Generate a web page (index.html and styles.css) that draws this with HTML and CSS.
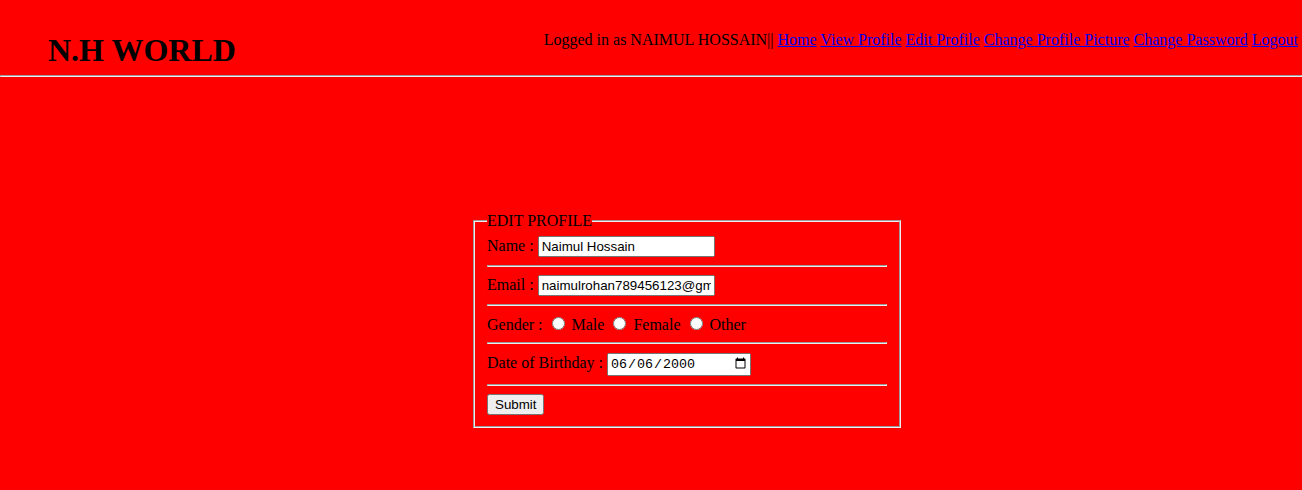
FILE: index.html
```html
<!DOCTYPE html>
<html>
<head>
<meta charset="utf-8">
<title>Edit Profile</title>
<link rel="stylesheet" href="styles.css">
</head>
<body>
<header class="top">
  <h1 class="brand">N.H WORLD</h1>
  <nav class="nav">Logged in as NAIMUL HOSSAIN|| <a href="#">Home</a> <a href="#">View Profile</a> <a href="#">Edit Profile</a> <a href="#">Change Profile Picture</a> <a href="#">Change Password</a> <a href="#">Logout</a></nav>
</header>
<hr class="rule">
<main class="main">
  <form class="form">
    <fieldset class="box">
      <legend class="legend">EDIT PROFILE</legend>
      <div class="row">Name : <input class="text" type="text" value="Naimul Hossain"></div>
      <hr class="sep">
      <div class="row">Email : <input class="text" type="text" value="naimulrohan789456123@gmail.com"></div>
      <hr class="sep">
      <div class="row">Gender : <input type="radio" name="g"> Male <input type="radio" name="g"> Female <input type="radio" name="g"> Other</div>
      <hr class="sep">
      <div class="row">Date of Birthday : <input class="date" type="date" value="2000-06-06"></div>
      <hr class="sep">
      <div class="row"><input class="btn" type="submit" value="Submit"></div>
    </fieldset>
  </form>
</main>
</body>
</html>
```
FILE: styles.css
```css
html, body {
  margin: 0;
  background: #ff0000;
}
body {
  font-family: "Liberation Serif", "Times New Roman", serif;
  font-size: 16px;
  color: #000;
}
.top {
  display: flex;
  justify-content: space-between;
  align-items: flex-start;
  padding: 31px 4px 0 48px;
}
.brand {
  margin: 1px 0 0;
  font-size: 32px;
  font-weight: bold;
}
.nav a {
  color: #0000ee;
}
.rule {
  margin: 6px 0 0;
}
.main {
  padding: 135px 0 0 473px;
}
.form {
  margin: 0;
}
.box {
  width: 400px;
  margin: 0;
  padding-bottom: 11px;
  box-sizing: content-box;
}
.legend {
  padding: 0;
}
.sep {
  margin: 8px 0;
}
.text {
  font-family: "Liberation Sans", Arial, sans-serif;
  font-size: 13.333px;
  width: 177px;
  height: 21px;
  box-sizing: border-box;
}
.date {
  font-family: "Liberation Mono", monospace;
  font-size: 13.333px;
  width: 144px;
  height: 23px;
  margin-top: 1px;
  box-sizing: border-box;
}
.btn {
  font-family: "Liberation Sans", Arial, sans-serif;
  font-size: 13.333px;
  width: 57px;
  height: 21px;
  box-sizing: border-box;
  padding: 0 6px;
}
```
